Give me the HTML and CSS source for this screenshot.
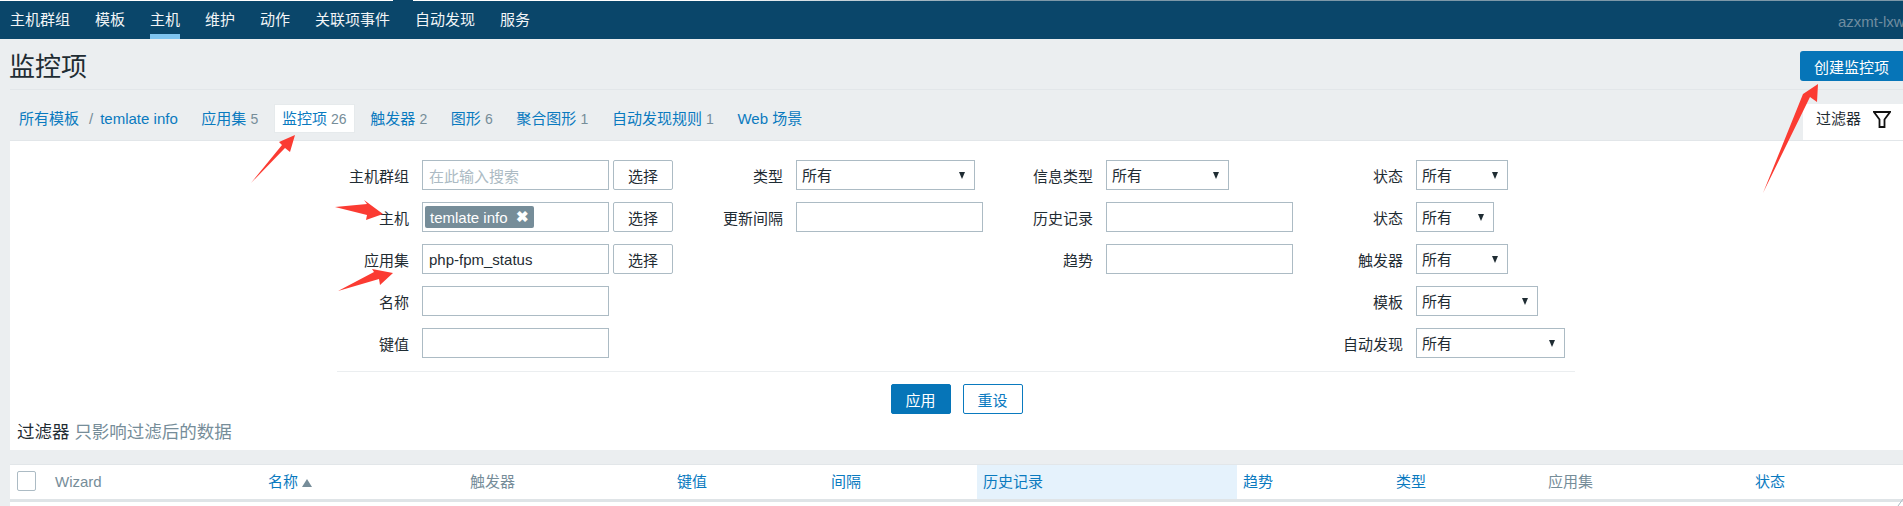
FILE: index.html
```html
<!DOCTYPE html>
<html lang="zh-CN">
<head>
    <meta charset="UTF-8">
    <title>监控项</title>
    <link rel="stylesheet" href="styles.css">
</head>
<body>

    <!-- Thin strip above the menu, cut off at the top of the capture -->
    <div class="top-strip">
        <span class="strip-left"></span>
        <span class="strip-right"></span>
    </div>

    <!-- Top menu -->
    <div class="top-nav">
        <a href="#">主机群组</a>
        <a href="#">模板</a>
        <a href="#" class="selected">主机</a>
        <a href="#">维护</a>
        <a href="#">动作</a>
        <a href="#">关联项事件</a>
        <a href="#">自动发现</a>
        <a href="#">服务</a>
        <span class="user">azxmt-lxw</span>
    </div>

    <div class="title-row">
        <h1>监控项</h1>
        <button class="create-btn">创建监控项</button>
    </div>

    <!-- Breadcrumbs and template tabs -->
    <div class="tabs-row">
        <div class="tabs">
            <a href="#" class="crumb">所有模板</a>
            <span class="crumb-sep">/</span>
            <a href="#" class="crumb">temlate info</a>
            <a href="#" class="tab">应用集 <span>5</span></a>
            <a href="#" class="tab active">监控项 <span>26</span></a>
            <a href="#" class="tab">触发器 <span>2</span></a>
            <a href="#" class="tab">图形 <span>6</span></a>
            <a href="#" class="tab">聚合图形 <span>1</span></a>
            <a href="#" class="tab">自动发现规则 <span>1</span></a>
            <a href="#" class="tab">Web 场景</a>
        </div>
        <div class="filter-tab">
            <span>过滤器</span>
            <svg class="funnel" width="18" height="17" viewBox="0 0 18 17">
                <path d="M1 1h16l-5.5 7.5V16h-5V8.5z" fill="none" stroke="#111" stroke-width="1.8"/>
            </svg>
        </div>
    </div>

    <!-- Filter form -->
    <div class="filter">
        <div class="filter-cols">
            <div class="col col1">
                <div class="field">
                    <label>主机群组</label>
                    <div class="input placeholder">在此输入搜索</div>
                    <button class="pick-btn">选择</button>
                </div>
                <div class="field">
                    <label>主机</label>
                    <div class="input"><span class="chip">temlate info<b>✖</b></span></div>
                    <button class="pick-btn">选择</button>
                </div>
                <div class="field">
                    <label>应用集</label>
                    <div class="input">php-fpm_status</div>
                    <button class="pick-btn">选择</button>
                </div>
                <div class="field">
                    <label>名称</label>
                    <div class="input"></div>
                </div>
                <div class="field">
                    <label>键值</label>
                    <div class="input"></div>
                </div>
            </div>
            <div class="col col2">
                <div class="field">
                    <label>类型</label>
                    <div class="select w179">所有</div>
                </div>
                <div class="field">
                    <label>更新间隔</label>
                    <div class="input"></div>
                </div>
            </div>
            <div class="col col3">
                <div class="field">
                    <label>信息类型</label>
                    <div class="select w123">所有</div>
                </div>
                <div class="field">
                    <label>历史记录</label>
                    <div class="input"></div>
                </div>
                <div class="field">
                    <label>趋势</label>
                    <div class="input"></div>
                </div>
            </div>
            <div class="col col4">
                <div class="field">
                    <label>状态</label>
                    <div class="select w92">所有</div>
                </div>
                <div class="field">
                    <label>状态</label>
                    <div class="select w78">所有</div>
                </div>
                <div class="field">
                    <label>触发器</label>
                    <div class="select w92">所有</div>
                </div>
                <div class="field">
                    <label>模板</label>
                    <div class="select w122">所有</div>
                </div>
                <div class="field">
                    <label>自动发现</label>
                    <div class="select w149">所有</div>
                </div>
            </div>
        </div>
        <div class="filter-actions">
            <button class="apply-btn">应用</button>
            <button class="reset-btn">重设</button>
        </div>
        <div class="filter-note">过滤器 <span>只影响过滤后的数据</span></div>
    </div>

    <!-- Items table header -->
    <div class="table-head">
        <div class="cell"><span class="checkbox"></span></div>
        <div class="cell muted">Wizard</div>
        <div class="cell">名称 <span class="sort"></span></div>
        <div class="cell muted">触发器</div>
        <div class="cell">键值</div>
        <div class="cell">间隔</div>
        <div class="cell hl">历史记录</div>
        <div class="cell">趋势</div>
        <div class="cell">类型</div>
        <div class="cell muted">应用集</div>
        <div class="cell">状态</div>
    </div>
    <div class="table-body"></div>

    <!-- Red annotation arrows drawn over the screenshot -->
    <svg class="arrows" width="1903" height="506" viewBox="0 0 1903 506">
        <polygon points="295,135 290,152 285,148 251,183 282,145 279,142"/>
        <polygon points="1818,84 1817,102 1810,97 1763,193 1803,94"/>
        <polygon points="335,207 367,204 364,200 383,214 366,220 367,215"/>
        <polygon points="338,291 374,272 372,269 393,273 380,285 379,279"/>
        <line x1="1903" y1="499" x2="1898" y2="506"/>
    </svg>

</body>
</html>
```

FILE: styles.css
```css
* {
    box-sizing: border-box;
}

html, body {
    height: 506px;
    overflow: hidden;
}

body {
    position: relative;
    margin: 0;
    background-color: #ebeef0;
    color: #1f2c33;
    font-family: "Liberation Sans", "Noto Sans CJK SC", sans-serif;
    font-size: 15px;
}

a {
    color: #0a7abf;
    text-decoration: none;
}

button {
    font-family: inherit;
    font-size: 15px;
    cursor: pointer;
}

/* Top strip */
.top-strip {
    display: flex;
    justify-content: space-between;
    height: 1px;
    background-color: #0a466a;
}

.strip-left {
    width: 393px;
    background-color: #fff;
}

.strip-right {
    width: 1490px;
    background: linear-gradient(to right, #fff 20%, #7d98a8 40%);
}

/* Top menu */
.top-nav {
    display: flex;
    gap: 25px;
    height: 38px;
    padding: 0 0 0 10px;
    background-color: #0a466a;
}

.top-nav a {
    height: 38px;
    padding-top: 10px;
    color: #f2f5f7;
    line-height: 18px;
}

.top-nav a.selected {
    border-bottom: 5px solid #7fc4f0;
}

.top-nav .user {
    margin-left: auto;
    padding-top: 12px;
    color: #6f8da0;
    white-space: nowrap;
    width: 65px;
    overflow: hidden;
}

/* Title */
.title-row {
    display: flex;
    justify-content: space-between;
    height: 51px;
    margin-left: 10px;
    padding-top: 12px;
    border-bottom: 1px solid #e2e6e9;
}

.title-row h1 {
    margin: 2px 0 0 -1px;
    font-size: 26px;
    font-weight: normal;
    line-height: 28px;
}

.create-btn {
    width: 103px;
    height: 30px;
    border: 0;
    border-radius: 3px 0 0 3px;
    background-color: #0675b8;
    color: #fff;
}

/* Tabs */
.tabs-row {
    display: flex;
    justify-content: space-between;
    height: 50px;
    padding: 14px 0 0 11px;
}

.tabs {
    display: flex;
    align-items: flex-start;
}

.crumb {
    padding: 0 8px;
    line-height: 29px;
}

.crumb-sep {
    padding: 0 2px;
    color: #768d99;
    line-height: 29px;
}

.crumb-sep + .crumb {
    padding-left: 5px;
}

.tab {
    height: 29px;
    margin-left: 7.6px;
    padding: 0 8px;
    line-height: 29px;
    white-space: nowrap;
}

.tab span {
    color: #768d99;
    font-size: 14px;
}

.tab.active {
    background-color: #fff;
    border: 1px solid #e6eaec;
    padding: 0 7px;
    line-height: 27px;
}

.filter-tab {
    display: flex;
    align-items: flex-start;
    gap: 12px;
    width: 100px;
    height: 36px;
    padding: 7px 0 0 13px;
    background-color: #fff;
    line-height: 16px;
}

/* Filter */
.filter {
    height: 310px;
    margin-left: 10px;
    padding-top: 19px;
    background-color: #fff;
    border-top: 1px solid #e2e6e9;
}

.filter-cols {
    display: flex;
    height: 212px;
    margin-left: 327px;
    margin-right: 328px;
    border-bottom: 1px solid #ebeef0;
}

.col {
    display: flex;
    flex-direction: column;
    gap: 12px;
}

.col1 {
    width: 374px;
}

.col2,
.col3 {
    width: 310px;
}

.field {
    display: flex;
    align-items: center;
    height: 30px;
}

.field label {
    flex: none;
    width: 72px;
    margin-right: 13px;
    text-align: right;
    white-space: nowrap;
}

.input {
    display: flex;
    align-items: center;
    width: 187px;
    height: 30px;
    padding: 0 6px;
    background-color: #fff;
    border: 1px solid #acbbc4;
}

.input.placeholder {
    color: #acbbc4;
}

.chip {
    display: flex;
    align-items: center;
    width: 109px;
    height: 22px;
    margin-left: -4px;
    padding: 0 5px;
    border-radius: 2px;
    background-color: #768d99;
    color: #fff;
    white-space: nowrap;
}

.chip b {
    margin-left: 8px;
    font-size: 15px;
    line-height: 20px;
}

.pick-btn {
    width: 60px;
    height: 30px;
    margin-left: 4px;
    padding: 0;
    background-color: #fff;
    border: 1px solid #acbbc4;
    border-radius: 2px;
    color: #1f2c33;
}

.select {
    position: relative;
    height: 30px;
    padding: 0 5px;
    background-color: #fff;
    border: 1px solid #acbbc4;
    line-height: 30px;
}

.select::after {
    content: "";
    position: absolute;
    top: 11px;
    right: 9px;
    border-top: 7px solid #1f2c33;
    border-left: 3.5px solid transparent;
    border-right: 3.5px solid transparent;
}

.w78 { width: 78px; }
.w92 { width: 92px; }
.w122 { width: 122px; }
.w123 { width: 123px; }
.w149 { width: 149px; }
.w179 { width: 179px; }

.filter-actions {
    display: flex;
    justify-content: center;
    gap: 12px;
    margin-top: 12px;
}

.apply-btn, .reset-btn {
    width: 60px;
    height: 30px;
    padding: 0;
    border-radius: 2px;
}

.apply-btn {
    background-color: #0675b8;
    border: 1px solid #0675b8;
    color: #fff;
}

.reset-btn {
    background-color: #fff;
    border: 1px solid #0a7abf;
    color: #0a7abf;
}

.filter-note {
    margin: 8px 0 0 7px;
    font-size: 17.5px;
    line-height: 20px;
}

.filter-note span {
    color: #768d99;
}

/* Table head */
.table-head {
    display: grid;
    grid-template-columns: 39px 213px 202px 207px 154px 152px 260px 153px 152px 207px 154px;
    height: 38px;
    margin-top: 14px;
    margin-left: 10px;
    background-color: #fff;
    border-top: 1px solid #e2e6e9;
    border-bottom: 3px solid #dfe4e7;
}

.cell {
    padding-left: 6px;
    color: #0a7abf;
    line-height: 34px;
    white-space: nowrap;
}

.cell.muted {
    color: #768d99;
}

.cell.hl {
    background-color: #e5f2fc;
}

.sort {
    display: inline-block;
    border-bottom: 8px solid #768d99;
    border-left: 5px solid transparent;
    border-right: 5px solid transparent;
}

.checkbox {
    display: block;
    width: 19px;
    height: 20px;
    margin: 6px 0 0 1px;
    background-color: #fff;
    border: 1px solid #acbbc4;
    border-radius: 2px;
}

.table-body {
    height: 6px;
    margin-left: 10px;
    background-color: #fff;
}

.arrows {
    position: absolute;
    top: 0;
    left: 0;
    pointer-events: none;
}

.arrows polygon {
    fill: #fb3b32;
}

.arrows line {
    stroke: #acbbc4;
}
```
